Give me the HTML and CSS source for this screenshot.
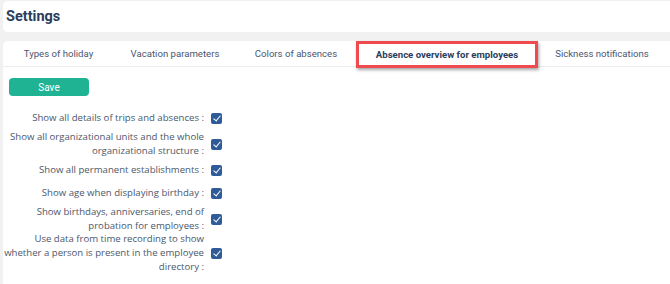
FILE: index.html
```html
<!DOCTYPE html>
<html lang="en">
<head>
    <meta charset="UTF-8">
    <title>Settings</title>
    <link rel="stylesheet" href="styles.css">
</head>
<body>
    <div class="page-header">
        <h1>Settings</h1>
    </div>

    <div class="card">
        <div class="tabs">
            <div class="tab">Types of holiday</div>
            <div class="tab">Vacation parameters</div>
            <div class="tab">Colors of absences</div>
            <div class="tab active">Absence overview for employees</div>
            <div class="tab">Sickness notifications</div>
        </div>

        <div class="content">
            <button class="btn-save">Save</button>

            <div class="options">
                <div class="option">
                    <label>Show all details of trips and absences :</label>
                    <span class="check"></span>
                </div>
                <div class="option">
                    <label>Show all organizational units and the whole organizational structure :</label>
                    <span class="check"></span>
                </div>
                <div class="option">
                    <label>Show all permanent establishments :</label>
                    <span class="check"></span>
                </div>
                <div class="option">
                    <label>Show age when displaying birthday :</label>
                    <span class="check"></span>
                </div>
                <div class="option">
                    <label>Show birthdays, anniversaries, end of probation for employees :</label>
                    <span class="check"></span>
                </div>
                <div class="option">
                    <label>Use data from time recording to show whether a person is present in the employee directory :</label>
                    <span class="check"></span>
                </div>
            </div>
        </div>
    </div>
</body>
</html>
```

FILE: styles.css
```css
* {
    margin: 0;
    padding: 0;
    box-sizing: border-box;
}

body {
    background-color: #f1f1f1;
    padding: 1px 0 0 3px;
    font-family: 'Open Sans', sans-serif;
    height: 284px;
    overflow: hidden;
}

.page-header {
    background-color: #fff;
    border-radius: 5px 0 0 5px;
    height: 31px;
    padding: 8px 0 0 3px;
}

h1 {
    font-family: Roboto, sans-serif;
    font-size: 14.5px;
    font-weight: bold;
    color: #2b3d5c;
    line-height: 16px;
}

.card {
    margin-top: 9px;
    background-color: #fff;
    border-radius: 5px 0 0 0;
    height: 250px;
}

.tabs {
    display: flex;
    height: 26px;
    border-bottom: 1px solid #ececec;
    font-family: Roboto, sans-serif;
    font-size: 9.6px;
    color: #4a566f;
}

.tab {
    display: flex;
    align-items: center;
    justify-content: center;
    height: 25px;
}

.tab:nth-child(1) { width: 111px; }
.tab:nth-child(2) { width: 122px; }
.tab:nth-child(3) { width: 120px; }
.tab:nth-child(4) { width: 182px; }
.tab:nth-child(5) { width: 128px; }

.tab.active {
    font-weight: bold;
    color: #2b3d5c;
    border: 3px solid #ef4b4f;
    height: 27px;
    box-shadow: 1px 2px 3px rgba(0, 0, 0, 0.35);
    position: relative;
}

.content {
    padding: 11px 0 0 1px;
}

.btn-save {
    display: block;
    width: 80px;
    height: 18px;
    margin-left: 5px;
    border: none;
    border-radius: 4px;
    background-color: #1fb394;
    color: #fff;
    font-family: Roboto, sans-serif;
    font-size: 10px;
    cursor: pointer;
}

.options {
    display: flex;
    flex-direction: column;
    gap: 5px;
    margin-top: 15px;
    width: 222px;
}

.option {
    display: flex;
    align-items: center;
}

.option:nth-child(4) {
    margin-top: 4px;
}

.option:nth-child(6) {
    margin-top: -6px;
}

.option label {
    width: 202px;
    padding-right: 2px;
    text-align: right;
    font-size: 9.6px;
    line-height: 14px;
    color: #4c586b;
}

.check {
    flex: none;
    width: 11px;
    height: 11px;
    margin-left: 5px;
    border-radius: 2px;
    background-color: #2f5c98;
    position: relative;
}

.check::after {
    content: "";
    position: absolute;
    left: 3.5px;
    top: 1.5px;
    width: 3px;
    height: 6px;
    border: solid #fff;
    border-width: 0 1.5px 1.5px 0;
    transform: rotate(40deg);
}
```
